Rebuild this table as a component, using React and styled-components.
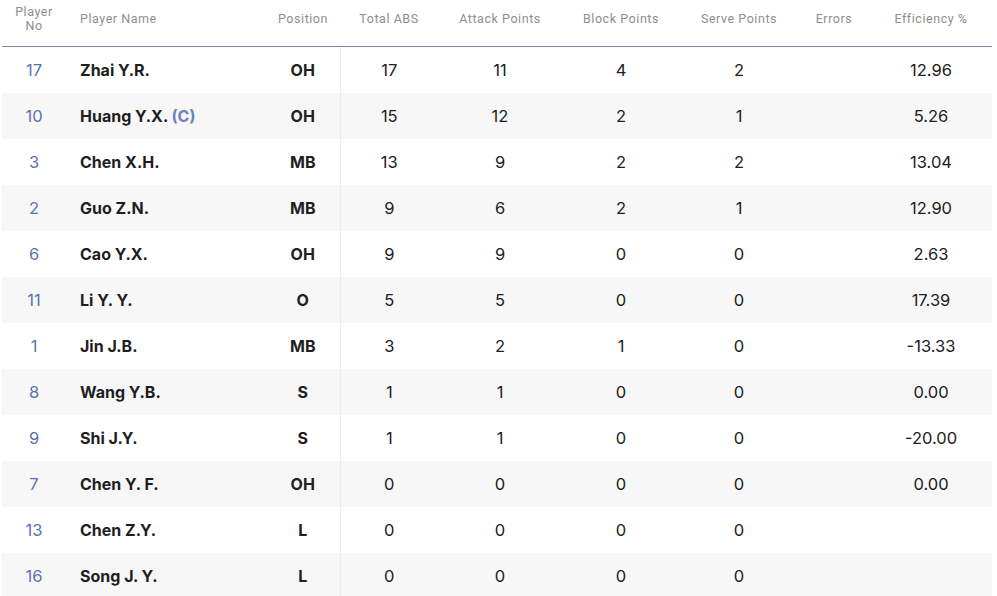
import React from 'react';
import styled, { createGlobalStyle } from 'styled-components';

const GlobalStyle = createGlobalStyle`
  html, body { margin: 0; padding: 0; background: #ffffff; }
  body { font-family: 'Inter', 'Lato', sans-serif; }
`;

const Wrapper = styled.div`
  padding: 0 0 0 2px;
  width: 991px;
`;

const Table = styled.table`
  width: 990px;
  border-collapse: collapse;
  table-layout: fixed;
`;

const HeadCell = styled.th`
  height: 38px;
  padding: 0 0 8px 0;
  font-family: 'Roboto', 'Liberation Sans', sans-serif;
  font-size: 12.5px;
  font-weight: 400;
  line-height: 14px;
  letter-spacing: 0.55px;
  color: #8e8e8e;
  text-align: ${p => p.$align || 'center'};
  padding-left: ${p => (p.$align === 'left' ? '14px' : '0')};
  vertical-align: middle;
  border-bottom: 1px solid #6f8cab;
  white-space: nowrap;
`;

const Row = styled.tr`
  height: 46px;
  background: ${p => (p.$striped ? '#f7f7f7' : '#ffffff')};
`;

const Cell = styled.td`
  padding: 0;
  font-size: 16.5px;
  font-weight: 400;
  color: #202020;
  text-align: center;
  vertical-align: middle;
`;

const NumCell = styled(Cell)`
  color: #5a72b0;
`;

const NameCell = styled(Cell)`
  text-align: left;
  padding-left: 14px;
  font-weight: 700;
  font-size: 16px;
  color: #1e1e1e;
`;

const PosCell = styled(Cell)`
  font-weight: 700;
  font-size: 16px;
  border-right: 1px solid #ececec;
`;

const Captain = styled.span`
  color: #6b80c2;
`;

const players = [
  ['17', 'Zhai Y.R.', false, 'OH', '17', '11', '4', '2', '', '12.96'],
  ['10', 'Huang Y.X.', true, 'OH', '15', '12', '2', '1', '', '5.26'],
  ['3', 'Chen X.H.', false, 'MB', '13', '9', '2', '2', '', '13.04'],
  ['2', 'Guo Z.N.', false, 'MB', '9', '6', '2', '1', '', '12.90'],
  ['6', 'Cao Y.X.', false, 'OH', '9', '9', '0', '0', '', '2.63'],
  ['11', 'Li Y. Y.', false, 'O', '5', '5', '0', '0', '', '17.39'],
  ['1', 'Jin J.B.', false, 'MB', '3', '2', '1', '0', '', '-13.33'],
  ['8', 'Wang Y.B.', false, 'S', '1', '1', '0', '0', '', '0.00'],
  ['9', 'Shi J.Y.', false, 'S', '1', '1', '0', '0', '', '-20.00'],
  ['7', 'Chen Y. F.', false, 'OH', '0', '0', '0', '0', '', '0.00'],
  ['13', 'Chen Z.Y.', false, 'L', '0', '0', '0', '0', '', ''],
  ['16', 'Song J. Y.', false, 'L', '0', '0', '0', '0', '', ''],
];

const widths = [64, 200, 74, 98, 124, 118, 118, 72, 122];

export default function App() {
  return (
    <Wrapper>
      <GlobalStyle />
      <Table>
        <colgroup>
          {widths.map((w, i) => <col key={i} style={{ width: w }} />)}
        </colgroup>
        <thead>
          <tr>
            <HeadCell>Player<br />No</HeadCell>
            <HeadCell $align="left">Player Name</HeadCell>
            <HeadCell>Position</HeadCell>
            <HeadCell>Total ABS</HeadCell>
            <HeadCell>Attack Points</HeadCell>
            <HeadCell>Block Points</HeadCell>
            <HeadCell>Serve Points</HeadCell>
            <HeadCell>Errors</HeadCell>
            <HeadCell>Efficiency %</HeadCell>
          </tr>
        </thead>
        <tbody>
          {players.map((p, i) => (
            <Row key={p[0]} $striped={i % 2 === 1}>
              <NumCell>{p[0]}</NumCell>
              <NameCell>
                {p[1]}
                {p[2] && <Captain> (C)</Captain>}
              </NameCell>
              <PosCell>{p[3]}</PosCell>
              <Cell>{p[4]}</Cell>
              <Cell>{p[5]}</Cell>
              <Cell>{p[6]}</Cell>
              <Cell>{p[7]}</Cell>
              <Cell>{p[8]}</Cell>
              <Cell>{p[9]}</Cell>
            </Row>
          ))}
        </tbody>
      </Table>
    </Wrapper>
  );
}
